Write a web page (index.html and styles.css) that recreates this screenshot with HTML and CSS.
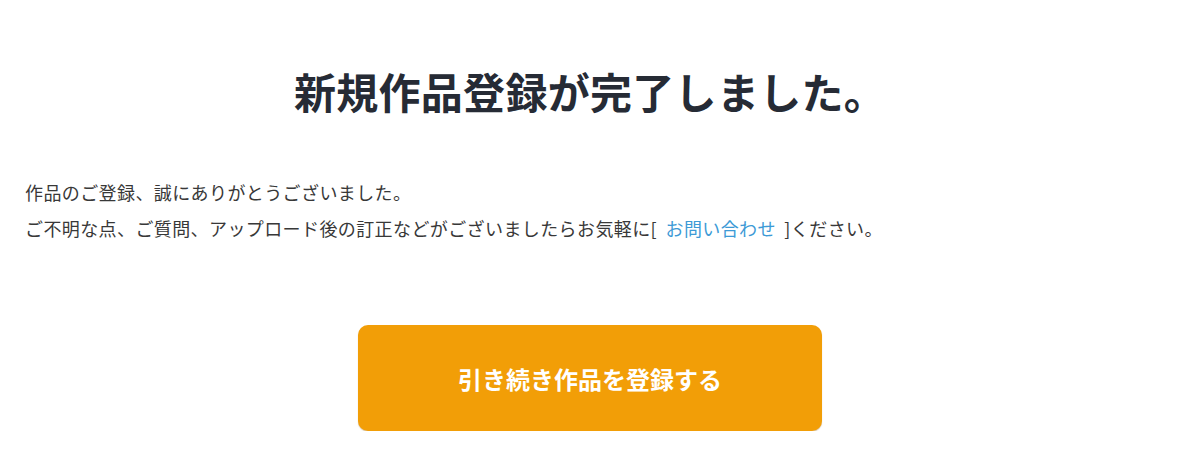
FILE: index.html
```html
<!DOCTYPE html>
<html lang="ja">
<head>
<meta charset="utf-8">
<title>新規作品登録完了</title>
<link rel="stylesheet" href="styles.css">
</head>
<body>
<main class="page">
  <h1 class="title">新規作品登録が完了しました。</h1>
  <div class="message">
    <p>作品のご登録、誠にありがとうございました。</p>
    <p>ご不明な点、ご質問、アップロード後の訂正などがございましたらお気軽に[ <a class="link" href="#">お問い合わせ</a> ]ください。</p>
  </div>
  <div class="actions">
    <a class="btn" href="#">引き続き作品を登録する</a>
  </div>
</main>
</body>
</html>
```

FILE: styles.css
```css
html, body {
  margin: 0;
  padding: 0;
  background: #ffffff;
}
body {
  font-family: "Noto Sans CJK JP", "Noto Sans", sans-serif;
  color: #333333;
}
.page {
  width: 1180px;
  box-sizing: border-box;
  padding: 59px 25px 0;
}
.title {
  margin: 0;
  font-size: 42px;
  line-height: 63px;
  font-weight: 700;
  letter-spacing: 0.3px;
  text-align: center;
  color: #262b35;
}
.message {
  margin-top: 52px;
  font-size: 18px;
  line-height: 36px;
  letter-spacing: 0.4px;
  word-spacing: 4px;
  color: #383838;
}
.message p {
  margin: 0;
}
.link {
  color: #3d9ad6;
  text-decoration: none;
}
.actions {
  display: flex;
  justify-content: center;
  margin-top: 79px;
}
.btn {
  display: flex;
  align-items: center;
  justify-content: center;
  width: 464px;
  height: 106px;
  border-radius: 10px;
  background: #f29e07;
  color: #ffffff;
  font-size: 24px;
  font-weight: 700;
  text-decoration: none;
  box-shadow: 0 1px 1px rgba(150, 100, 20, 0.35);
}
```
